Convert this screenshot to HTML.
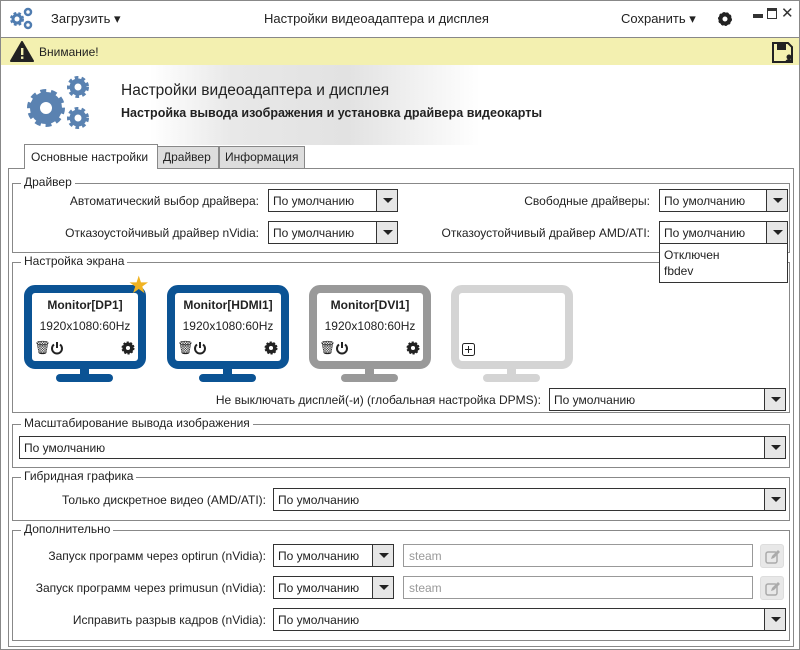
<!DOCTYPE html>
<html><head><meta charset="utf-8"><style>
*{box-sizing:border-box;margin:0;padding:0}
body{width:800px;height:650px;overflow:hidden;background:#fff;font-family:"Liberation Sans","DejaVu Sans",sans-serif;font-size:12px;color:#222;position:relative}
.a{position:absolute}
.win{left:0;top:0;width:800px;height:650px;border:1px solid #888}
.cb{position:absolute;height:23px;border:1px solid #333;background:#fff;padding:4px 0 0 4px;white-space:nowrap}
.cb .ar{position:absolute;right:0;top:0;width:21px;height:21px;border-left:1px solid #333;background:#e6e6e6}
.cb .ar:after{content:"";position:absolute;left:6px;top:8px;border-left:5px solid transparent;border-right:5px solid transparent;border-top:5px solid #222}
.lbl{position:absolute;white-space:nowrap;text-align:right}
.grp{position:absolute;border:1px solid #888}
.grp>span{position:absolute;top:-9px;left:8px;background:#fff;padding:0 3px;font-size:12px}
.mon{position:absolute;width:122px;height:98px}
.mon .f{position:absolute;left:0;top:0;width:122px;height:84px;border:8px solid;border-radius:11px;background:#fff}
.mon .n{position:absolute;left:56px;top:82px;width:9px;height:10px}
.mon .b{position:absolute;left:32px;top:89px;width:57px;height:8px;border-radius:4px}
.mon .t1{position:absolute;left:0;width:106px;top:5px;text-align:center;font-weight:bold;font-size:12px}
.mon .t2{position:absolute;left:0;width:106px;top:26px;text-align:center;font-size:12px}
.inp{position:absolute;height:23px;border:1px solid #999;background:#fff;color:#999;padding:4px 0 0 5px}
.eb{position:absolute;width:24px;height:24px;border-radius:3px;background:#e8e8e8;border:1px solid #ddd}
</style></head><body>
<div class="a win"></div>
<svg class="a" style="left:8px;top:6px" width="28" height="24" viewBox="0 0 28 24"><g fill="#4f7cb0"><circle cx="9" cy="13" r="5.5" stroke="#4f7cb0" stroke-width="3" stroke-dasharray="2.5 2" fill="none"/><circle cx="9" cy="13" r="4" fill="none" stroke="#4f7cb0" stroke-width="3"/><circle cx="20" cy="6" r="3" fill="none" stroke="#4f7cb0" stroke-width="2.5"/><circle cx="20" cy="19" r="3" fill="none" stroke="#4f7cb0" stroke-width="2.5"/></g></svg>
<div class="a" style="left:51px;top:11px;font-size:13px">Загрузить ▾</div>
<div class="a" style="left:264px;top:11px;font-size:13px">Настройки видеоадаптера и дисплея</div>
<div class="a" style="left:621px;top:11px;font-size:13px">Сохранить ▾</div>
<svg class="a" style="left:718px;top:12px" width="14" height="14" viewBox="0 0 14 14"><circle cx="7" cy="7" r="4.5" fill="none" stroke="#222" stroke-width="4"/><circle cx="7" cy="7" r="6" fill="none" stroke="#222" stroke-width="2" stroke-dasharray="2 1.7"/></svg>
<div class="a" style="left:753px;top:14px;width:10px;height:4px;background:#333"></div>
<div class="a" style="left:767px;top:8px;width:10px;height:11px;border:1px solid #333;border-top:3px solid #333"></div>
<div class="a" style="left:781px;top:4px;font-size:15px;color:#333">✕</div>
<div class="a" style="left:0;top:37px;width:800px;height:1px;background:#888"></div>
<div class="a" style="left:1px;top:38px;width:798px;height:27px;background:#f3f0b0"></div>
<svg class="a" style="left:10px;top:41px" width="24" height="21" viewBox="0 0 24 21"><path d="M12 1 L23 20 L1 20 Z" fill="#222" stroke="#222" stroke-linejoin="round" stroke-width="2"/><rect x="11" y="7" width="2.4" height="7" fill="#f3f0b0"/><rect x="11" y="15.5" width="2.4" height="2.4" fill="#f3f0b0"/></svg>
<div class="a" style="left:39px;top:45px;font-size:12px">Внимание!</div>
<svg class="a" style="left:772px;top:42px" width="24" height="22" viewBox="0 0 24 22"><path d="M1 1h15l4 4v15H1z" fill="none" stroke="#222" stroke-width="2"/><rect x="5" y="2" width="9" height="6" fill="#222"/><circle cx="17" cy="15" r="2.5" fill="#222"/><path d="M13 21a4 4 0 0 1 8 0z" fill="#222"/></svg>
<div class="a" style="left:150px;top:65px;width:330px;height:80px;background:linear-gradient(90deg,#fff 0%,#e8e8e8 25%,#e2e2e2 60%,#f4f4f4 85%,#fff 100%)"></div>
<svg class="a" style="left:26px;top:73px" width="66" height="62" viewBox="0 0 66 62"><g fill="none" stroke="#5a82b1"><circle cx="20" cy="35" r="11" stroke-width="10"/><circle cx="20" cy="35" r="16" stroke-width="6" stroke-dasharray="5.5 4.5"/><circle cx="52" cy="14" r="6" stroke-width="5"/><circle cx="52" cy="14" r="9" stroke-width="4" stroke-dasharray="3.5 3"/><circle cx="52" cy="45" r="6" stroke-width="5"/><circle cx="52" cy="45" r="9" stroke-width="4" stroke-dasharray="3.5 3"/></g></svg>
<div class="a" style="left:121px;top:82px;font-size:15.5px;color:#222">Настройки видеоадаптера и дисплея</div>
<div class="a" style="left:121px;top:106px;font-size:12.5px;font-weight:bold;color:#222">Настройка вывода изображения и установка драйвера видеокарты</div>
<div class="a" style="left:8px;top:168px;width:786px;height:479px;border:1px solid #888"></div>
<div class="a" style="left:157px;top:146px;width:62px;height:23px;background:#ddd;border:1px solid #888;padding:3px 0 0 5px">Драйвер</div>
<div class="a" style="left:219px;top:146px;width:86px;height:23px;background:#ddd;border:1px solid #888;padding:3px 0 0 5px">Информация</div>
<div class="a" style="left:24px;top:144px;width:134px;height:25px;background:#fff;border:1px solid #888;border-bottom:none;padding:5px 0 0 6px">Основные настройки</div>
<div class="grp" style="left:12px;top:183px;width:778px;height:70px"><span>Драйвер</span></div>
<div class="lbl" style="right:541px;top:194px">Автоматический выбор драйвера:</div>
<div class="cb" style="left:268px;top:189px;width:130px">По умолчанию<div class="ar"></div></div>
<div class="lbl" style="right:150px;top:194px">Свободные драйверы:</div>
<div class="cb" style="left:659px;top:189px;width:129px">По умолчанию<div class="ar"></div></div>
<div class="lbl" style="right:541px;top:226px">Отказоустойчивый драйвер nVidia:</div>
<div class="cb" style="left:268px;top:221px;width:130px">По умолчанию<div class="ar"></div></div>
<div class="lbl" style="right:150px;top:226px">Отказоустойчивый драйвер AMD/ATI:</div>
<div class="grp" style="left:12px;top:262px;width:778px;height:151px"><span>Настройка экрана</span></div>
<div class="mon" style="left:24px;top:285px"><div class="f" style="border-color:#0b5394"><div class="t1">Monitor[DP1]</div><div class="t2">1920x1080:60Hz</div>
<div class="a" style="left:2px;top:47px;font-size:13px">🗑</div><svg class="a" style="left:18px;top:48px" width="14" height="14"><path d="M4 3.5a5 5 0 1 0 6 0" fill="none" stroke="#222" stroke-width="2"/><path d="M7 1v6" stroke="#222" stroke-width="2"/></svg>
<svg class="a" style="left:89px;top:48px" width="14" height="14"><circle cx="7" cy="7" r="3.8" fill="none" stroke="#222" stroke-width="3.5"/><circle cx="7" cy="7" r="5.5" fill="none" stroke="#222" stroke-width="2" stroke-dasharray="2 1.5"/></svg></div>
<div class="n" style="background:#0b5394"></div><div class="b" style="background:#0b5394"></div></div>
<div class="a" style="left:128px;top:274px;color:#f0b323;font-size:24px;line-height:24px">★</div>
<div class="mon" style="left:167px;top:285px"><div class="f" style="border-color:#0b5394"><div class="t1">Monitor[HDMI1]</div><div class="t2">1920x1080:60Hz</div>
<div class="a" style="left:2px;top:47px;font-size:13px">🗑</div><svg class="a" style="left:18px;top:48px" width="14" height="14"><path d="M4 3.5a5 5 0 1 0 6 0" fill="none" stroke="#222" stroke-width="2"/><path d="M7 1v6" stroke="#222" stroke-width="2"/></svg>
<svg class="a" style="left:89px;top:48px" width="14" height="14"><circle cx="7" cy="7" r="3.8" fill="none" stroke="#222" stroke-width="3.5"/><circle cx="7" cy="7" r="5.5" fill="none" stroke="#222" stroke-width="2" stroke-dasharray="2 1.5"/></svg></div>
<div class="n" style="background:#0b5394"></div><div class="b" style="background:#0b5394"></div></div>
<div class="mon" style="left:309px;top:285px"><div class="f" style="border-color:#999"><div class="t1">Monitor[DVI1]</div><div class="t2">1920x1080:60Hz</div>
<div class="a" style="left:2px;top:47px;font-size:13px">🗑</div><svg class="a" style="left:18px;top:48px" width="14" height="14"><path d="M4 3.5a5 5 0 1 0 6 0" fill="none" stroke="#222" stroke-width="2"/><path d="M7 1v6" stroke="#222" stroke-width="2"/></svg>
<svg class="a" style="left:89px;top:48px" width="14" height="14"><circle cx="7" cy="7" r="3.8" fill="none" stroke="#222" stroke-width="3.5"/><circle cx="7" cy="7" r="5.5" fill="none" stroke="#222" stroke-width="2" stroke-dasharray="2 1.5"/></svg></div>
<div class="n" style="background:#999"></div><div class="b" style="background:#999"></div></div>
<div class="mon" style="left:451px;top:285px"><div class="f" style="border-color:#d4d4d4">
<svg class="a" style="left:3px;top:50px" width="13" height="13"><rect x="0.5" y="0.5" width="12" height="12" rx="2" fill="none" stroke="#222"/><path d="M6.5 3v7M3 6.5h7" stroke="#222"/></svg></div>
<div class="n" style="background:#d4d4d4"></div><div class="b" style="background:#d4d4d4"></div></div>
<div class="lbl" style="right:259px;top:393px">Не выключать дисплей(-и) (глобальная настройка DPMS):</div>
<div class="cb" style="left:549px;top:388px;width:237px">По умолчанию<div class="ar"></div></div>
<div class="grp" style="left:12px;top:424px;width:778px;height:44px"><span>Масштабирование вывода изображения</span></div>
<div class="cb" style="left:19px;top:436px;width:767px">По умолчанию<div class="ar"></div></div>
<div class="grp" style="left:12px;top:477px;width:778px;height:44px"><span>Гибридная графика</span></div>
<div class="lbl" style="right:534px;top:493px">Только дискретное видео (AMD/ATI):</div>
<div class="cb" style="left:273px;top:488px;width:513px">По умолчанию<div class="ar"></div></div>
<div class="grp" style="left:12px;top:530px;width:778px;height:111px"><span>Дополнительно</span></div>
<div class="lbl" style="right:534px;top:549px">Запуск программ через optirun (nVidia):</div>
<div class="cb" style="left:273px;top:544px;width:121px">По умолчанию<div class="ar"></div></div>
<div class="inp" style="left:403px;top:544px;width:350px">steam</div>
<div class="eb" style="left:760px;top:544px"><svg class="a" style="left:4px;top:4px" width="15" height="15"><rect x="1" y="3" width="11" height="11" rx="2" fill="none" stroke="#aaa" stroke-width="1.5"/><path d="M6 10l1-3 6-6 2 2-6 6z" fill="#aaa"/></svg></div>
<div class="lbl" style="right:534px;top:581px">Запуск программ через primusun (nVidia):</div>
<div class="cb" style="left:273px;top:576px;width:121px">По умолчанию<div class="ar"></div></div>
<div class="inp" style="left:403px;top:576px;width:350px">steam</div>
<div class="eb" style="left:760px;top:576px"><svg class="a" style="left:4px;top:4px" width="15" height="15"><rect x="1" y="3" width="11" height="11" rx="2" fill="none" stroke="#aaa" stroke-width="1.5"/><path d="M6 10l1-3 6-6 2 2-6 6z" fill="#aaa"/></svg></div>
<div class="lbl" style="right:534px;top:613px">Исправить разрыв кадров (nVidia):</div>
<div class="cb" style="left:273px;top:608px;width:513px">По умолчанию<div class="ar"></div></div>
<div class="cb" style="left:659px;top:221px;width:129px">По умолчанию<div class="ar"></div></div>
<div class="a" style="left:659px;top:243px;width:129px;height:40px;background:#fff;border:1px solid #333;padding:3px 0 0 4px;line-height:16px">Отключен<br>fbdev</div>
</body></html>
